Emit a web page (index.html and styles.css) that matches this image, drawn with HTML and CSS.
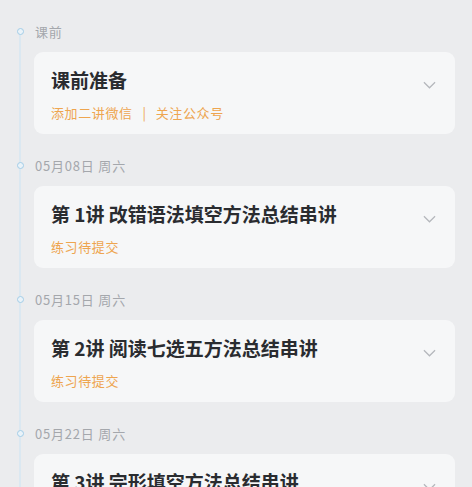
FILE: index.html
```html
<!DOCTYPE html>
<html lang="zh">
<head>
    <meta charset="UTF-8">
    <meta name="viewport" content="width=device-width, initial-scale=1.0">
    <title>课程安排</title>
    <link rel="stylesheet" href="styles.css">
</head>
<body>
    <div class="timeline">
        <div class="section">
            <div class="date"><span class="dot"></span>课前</div>
            <div class="card">
                <div class="info">
                    <div class="title">课前准备</div>
                    <div class="sub">添加二讲微信<span class="sep">|</span>关注公众号</div>
                </div>
                <svg class="arrow" viewBox="0 0 14 8"><path d="M1 1l6 6 6-6"/></svg>
            </div>
        </div>
        <div class="section">
            <div class="date"><span class="dot"></span>05月08日 周六</div>
            <div class="card">
                <div class="info">
                    <div class="title">第 1讲 改错语法填空方法总结串讲</div>
                    <div class="sub">练习待提交</div>
                </div>
                <svg class="arrow" viewBox="0 0 14 8"><path d="M1 1l6 6 6-6"/></svg>
            </div>
        </div>
        <div class="section">
            <div class="date"><span class="dot"></span>05月15日 周六</div>
            <div class="card">
                <div class="info">
                    <div class="title">第 2讲 阅读七选五方法总结串讲</div>
                    <div class="sub">练习待提交</div>
                </div>
                <svg class="arrow" viewBox="0 0 14 8"><path d="M1 1l6 6 6-6"/></svg>
            </div>
        </div>
        <div class="section">
            <div class="date"><span class="dot"></span>05月22日 周六</div>
            <div class="card">
                <div class="info">
                    <div class="title">第 3讲 完形填空方法总结串讲</div>
                    <div class="sub">练习待提交</div>
                </div>
                <svg class="arrow" viewBox="0 0 14 8"><path d="M1 1l6 6 6-6"/></svg>
            </div>
        </div>
    </div>
</body>
</html>
```

FILE: styles.css
```css
html, body {
    margin: 0;
    background: #ebecee;
    font-family: "Noto Sans CJK SC", "Noto Sans", sans-serif;
    overflow: hidden;
}
.timeline {
    position: relative;
    padding: 22px 17px 0 34px;
}
.timeline::before {
    content: "";
    position: absolute;
    left: 19px;
    top: 34px;
    bottom: 0;
    width: 2px;
    background: #dbe8f1;
}
.section {
    margin-bottom: 22px;
}
.date {
    position: relative;
    display: flex;
    align-items: center;
    gap: 11px;
    margin-left: -17px;
    height: 18px;
    font-size: 13px;
    letter-spacing: 0.8px;
    color: #a4a7ac;
}
.dot {
    width: 7px;
    height: 7px;
    box-sizing: border-box;
    border: 1.5px solid #a3cde7;
    border-radius: 50%;
    background: #eaf3f9;
}
.card {
    margin-top: 12px;
    height: 82px;
    box-sizing: border-box;
    background: #f6f7f8;
    border-radius: 9px;
    padding: 16px 19px 12px 17px;
    display: flex;
    justify-content: space-between;
    align-items: flex-start;
}
.title {
    font-size: 19px;
    line-height: 24px;
    font-weight: 700;
    color: #2a2c30;
}
.sub {
    margin-top: 12px;
    font-size: 13px;
    line-height: 18px;
    letter-spacing: 0.6px;
    color: #eea54f;
}
.sep {
    margin: 0 9px 0 10px;
}
.arrow {
    width: 13px;
    height: 8px;
    margin-top: 13px;
    fill: none;
    stroke: #b4b7bc;
    stroke-width: 1.3;
}
```
